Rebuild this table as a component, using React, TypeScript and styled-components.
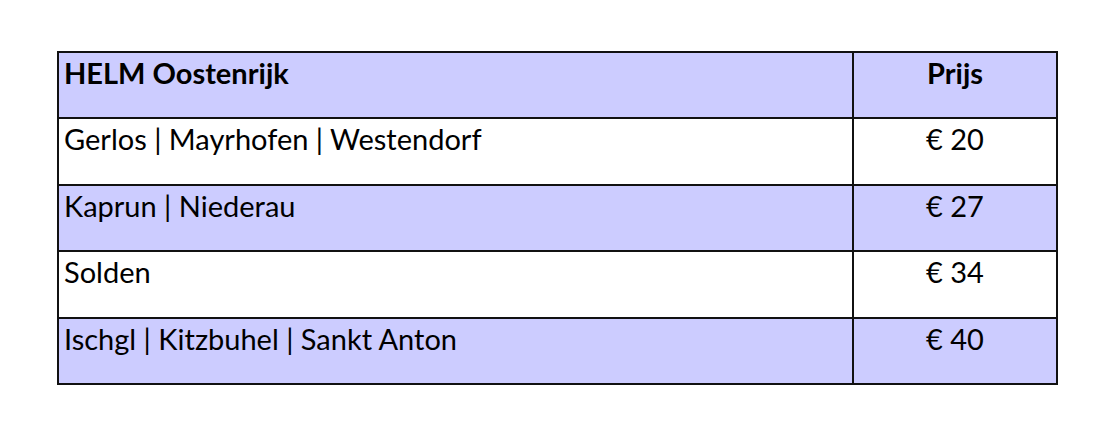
import React from "react";
import styled, { createGlobalStyle } from "styled-components";

const Global = createGlobalStyle`
  html, body { margin: 0; padding: 0; background: #ffffff; }
  body { font-family: Lato, "Open Sans", "Liberation Sans", sans-serif; }
`;

const Page = styled.div`
  padding: 51px 0 0 57px;
`;

const Table = styled.table`
  border-collapse: collapse;
  width: 1001px;
  table-layout: fixed;
  border: 2px solid #111;
`;

const Row = styled.tr<{ $shaded: boolean }>`
  height: 66.4px;
  background: ${(p) => (p.$shaded ? "#ccccff" : "#ffffff")};
`;

const Cell = styled.td<{ $bold?: boolean; $center?: boolean }>`
  border: 2px solid #111;
  vertical-align: top;
  padding: 3px 5px 0 5px;
  font-size: 29px;
  line-height: 34px;
  color: #000;
  font-weight: ${(p) => (p.$bold ? 700 : 400)};
  text-align: ${(p) => (p.$center ? "center" : "left")};
`;

const rows = [
  { name: "Gerlos | Mayrhofen | Westendorf", price: "€ 20" },
  { name: "Kaprun | Niederau", price: "€ 27" },
  { name: "Solden", price: "€ 34" },
  { name: "Ischgl | Kitzbuhel | Sankt Anton", price: "€ 40" },
];

export default function App() {
  return (
    <>
      <Global />
      <Page>
        <Table>
          <colgroup>
            <col style={{ width: 795 }} />
            <col />
          </colgroup>
          <tbody>
            <Row $shaded>
              <Cell $bold>HELM Oostenrijk</Cell>
              <Cell $bold $center>Prijs</Cell>
            </Row>
            {rows.map((r, i) => (
              <Row key={r.name} $shaded={i % 2 === 1}>
                <Cell>{r.name}</Cell>
                <Cell $center>{r.price}</Cell>
              </Row>
            ))}
          </tbody>
        </Table>
      </Page>
    </>
  );
}
